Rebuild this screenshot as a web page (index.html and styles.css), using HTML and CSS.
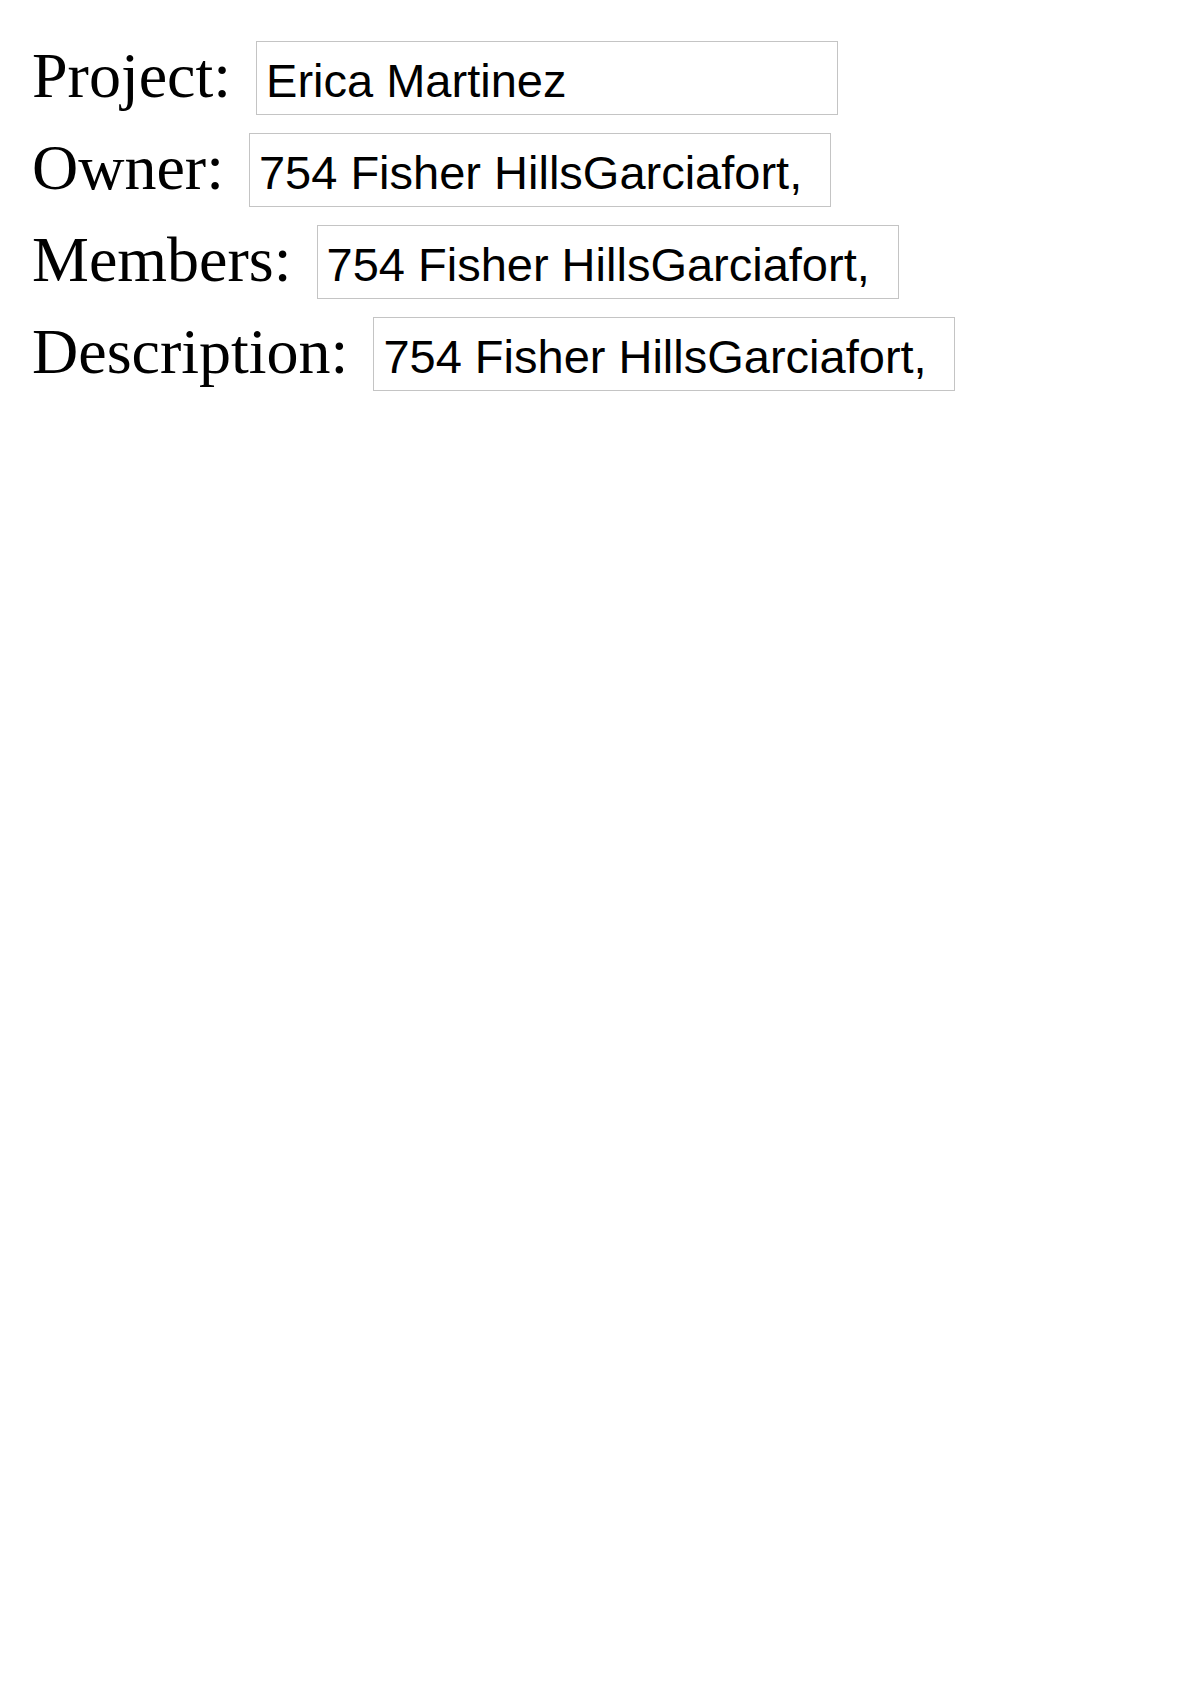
FILE: index.html
```html
<!DOCTYPE html>
<html>
<head>
<meta charset="utf-8">
<link rel="stylesheet" href="styles.css">
</head>
<body>
<div class="form">
  <div class="row"><label class="label">Project:</label><input class="field" type="text" value="Erica Martinez"></div>
  <div class="row"><label class="label">Owner:</label><input class="field" type="text" value="754 Fisher HillsGarciafort,"></div>
  <div class="row"><label class="label">Members:</label><input class="field" type="text" value="754 Fisher HillsGarciafort,"></div>
  <div class="row"><label class="label">Description:</label><input class="field" type="text" value="754 Fisher HillsGarciafort,"></div>
</div>
</body>
</html>
```
FILE: styles.css
```css
html, body {
  margin: 0;
  padding: 0;
  background: #ffffff;
}
.form {
  display: flex;
  flex-direction: column;
  gap: 18px;
  padding: 41px 0 0 32px;
}
.row {
  display: flex;
  align-items: baseline;
  gap: 25px;
}
.label {
  font-family: "Liberation Serif", "Times New Roman", serif;
  font-size: 64px;
  line-height: 69px;
  color: #000;
}
.field {
  box-sizing: border-box;
  width: 582px;
  height: 74px;
  padding: 5px 9px 0;
  margin: 0;
  border: 1px solid #c4c4c4;
  border-radius: 0;
  font-family: "Liberation Sans", Arial, sans-serif;
  font-size: 47px;
  color: #000;
  background: #fff;
  outline: none;
}
```
